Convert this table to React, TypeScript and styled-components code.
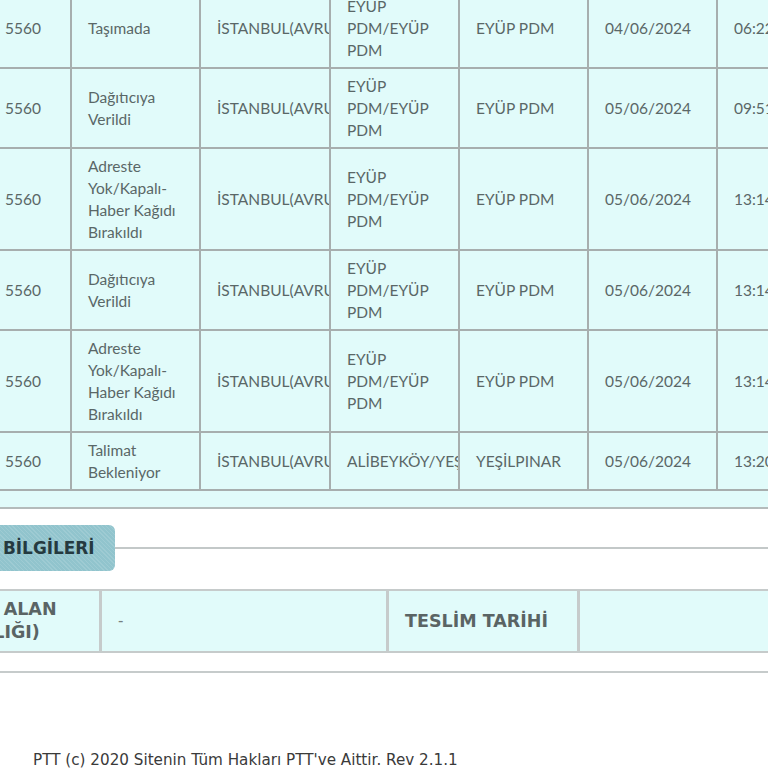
import React from "react";
import styled, { createGlobalStyle } from "styled-components";

const Global = createGlobalStyle`
  html, body { margin: 0; padding: 0; background: #ffffff; }
  body { width: 768px; height: 768px; overflow: hidden; }
`;

const Viewport = styled.div`
  width: 768px;
  height: 768px;
  overflow: hidden;
  background: #ffffff;
`;

const MovementsBox = styled.div`
  margin-top: -11px;
  background: #e1fbfa;
  padding-bottom: 16px;
  border-bottom: 2px solid #b4bbbb;
`;

const MoveTable = styled.table`
  border-collapse: separate;
  border-spacing: 0;
  table-layout: fixed;
  width: 893px;
  font-family: "Lato", "Open Sans", sans-serif;
  font-size: 15.5px;
  color: #5a6767;
`;

const Col = styled.col<{ $w: number }>`
  width: ${(p) => p.$w}px;
`;

const Cell = styled.td<{ $first?: boolean }>`
  box-sizing: border-box;
  padding: 6px 8px 6px ${(p) => (p.$first ? "5px" : "16px")};
  line-height: 22px;
  vertical-align: middle;
  border-right: 2px solid #a7aeae;
  border-bottom: 2px solid #a7aeae;
  overflow: hidden;
  white-space: ${(p) => (p.$first ? "nowrap" : "normal")};
`;

const SectionBox = styled.div`
  margin-top: 16px;
  border-bottom: 2px solid #c6cbcb;
  padding-bottom: 18px;
`;

const HeadRow = styled.div`
  display: flex;
  align-items: center;
`;

const Tab = styled.div`
  margin-left: -100px;
  height: 46px;
  display: flex;
  align-items: center;
  padding: 0 20px 0 28px;
  border-radius: 6px;
  background-color: #91c4cd;
  background-image: repeating-linear-gradient(
    45deg,
    rgba(255, 255, 255, 0.12) 0px,
    rgba(255, 255, 255, 0.12) 1px,
    rgba(255, 255, 255, 0) 1px,
    rgba(255, 255, 255, 0) 3px
  );
  font-family: "DejaVu Sans", Verdana, sans-serif;
  font-weight: bold;
  font-size: 16.9px;
  color: #253a40;
  white-space: nowrap;
`;

const HeadLine = styled.div`
  flex: 1;
  height: 2px;
  background: #c3c8c8;
`;

const InfoTable = styled.table`
  margin-top: 18px;
  margin-left: -92px;
  border-collapse: separate;
  border-spacing: 0;
  table-layout: fixed;
  width: 980px;
  font-family: "DejaVu Sans", Verdana, sans-serif;
  color: #5a6565;
  border-top: 2px solid #c6cbcb;
  border-left: 2px solid #c6cbcb;
`;

const InfoCell = styled.td<{ $label?: boolean }>`
  box-sizing: border-box;
  background: #e1fbfa;
  padding: 7px 16px;
  line-height: 23px;
  vertical-align: middle;
  border-right: 3px solid #c6cbcb;
  border-bottom: 2px solid #c6cbcb;
  font-weight: ${(p) => (p.$label ? "bold" : "normal")};
  font-size: ${(p) => (p.$label ? "17.5px" : "15px")};
  color: ${(p) => (p.$label ? "#5a6464" : "#777f7f")};
`;

const Footer = styled.div`
  margin-top: 78px;
  padding-left: 33px;
  font-family: "DejaVu Sans", Verdana, sans-serif;
  font-size: 15.2px;
  line-height: 18px;
  color: #3a3a3a;
  white-space: nowrap;
`;

type Row = {
  status: string;
  city: string;
  office: string;
  unit: string;
  date: string;
  time: string;
};

const ADRESTE = "Adreste Yok/Kapalı-Haber Kağıdı Bırakıldı";

const rows: Row[] = [
  { status: "Taşımada", city: "İSTANBUL(AVRUPA)", office: "EYÜP PDM/EYÜP PDM", unit: "EYÜP PDM", date: "04/06/2024", time: "06:22" },
  { status: "Dağıtıcıya Verildi", city: "İSTANBUL(AVRUPA)", office: "EYÜP PDM/EYÜP PDM", unit: "EYÜP PDM", date: "05/06/2024", time: "09:51" },
  { status: ADRESTE, city: "İSTANBUL(AVRUPA)", office: "EYÜP PDM/EYÜP PDM", unit: "EYÜP PDM", date: "05/06/2024", time: "13:14" },
  { status: "Dağıtıcıya Verildi", city: "İSTANBUL(AVRUPA)", office: "EYÜP PDM/EYÜP PDM", unit: "EYÜP PDM", date: "05/06/2024", time: "13:14" },
  { status: ADRESTE, city: "İSTANBUL(AVRUPA)", office: "EYÜP PDM/EYÜP PDM", unit: "EYÜP PDM", date: "05/06/2024", time: "13:14" },
  { status: "Talimat Bekleniyor", city: "İSTANBUL(AVRUPA)", office: "ALİBEYKÖY/YEŞİLPINAR", unit: "YEŞİLPINAR", date: "05/06/2024", time: "13:20" },
];

const moveCols = [72, 129, 130, 129, 129, 129, 175];
const infoCols = [192, 287, 191, 310];

export default function App() {
  return (
    <>
      <Global />
      <Viewport>
        <MovementsBox>
          <MoveTable>
            <colgroup>
              {moveCols.map((w, i) => (
                <Col key={i} $w={w} />
              ))}
            </colgroup>
            <tbody>
              {rows.map((r, i) => (
                <tr key={i}>
                  <Cell $first>5560</Cell>
                  <Cell>{r.status}</Cell>
                  <Cell>{r.city}</Cell>
                  <Cell>{r.office}</Cell>
                  <Cell>{r.unit}</Cell>
                  <Cell>{r.date}</Cell>
                  <Cell>{r.time}</Cell>
                </tr>
              ))}
            </tbody>
          </MoveTable>
        </MovementsBox>

        <SectionBox>
          <HeadRow>
            <Tab>TESLİM BİLGİLERİ</Tab>
            <HeadLine />
          </HeadRow>
          <InfoTable>
            <colgroup>
              {infoCols.map((w, i) => (
                <Col key={i} $w={w} />
              ))}
            </colgroup>
            <tbody>
              <tr>
                <InfoCell $label>TESLİM ALAN (YAKINLIĞI)</InfoCell>
                <InfoCell>-</InfoCell>
                <InfoCell $label>TESLİM TARİHİ</InfoCell>
                <InfoCell></InfoCell>
              </tr>
            </tbody>
          </InfoTable>
        </SectionBox>

        <Footer>PTT (c) 2020 Sitenin Tüm Hakları PTT've Aittir. Rev 2.1.1</Footer>
      </Viewport>
    </>
  );
}
